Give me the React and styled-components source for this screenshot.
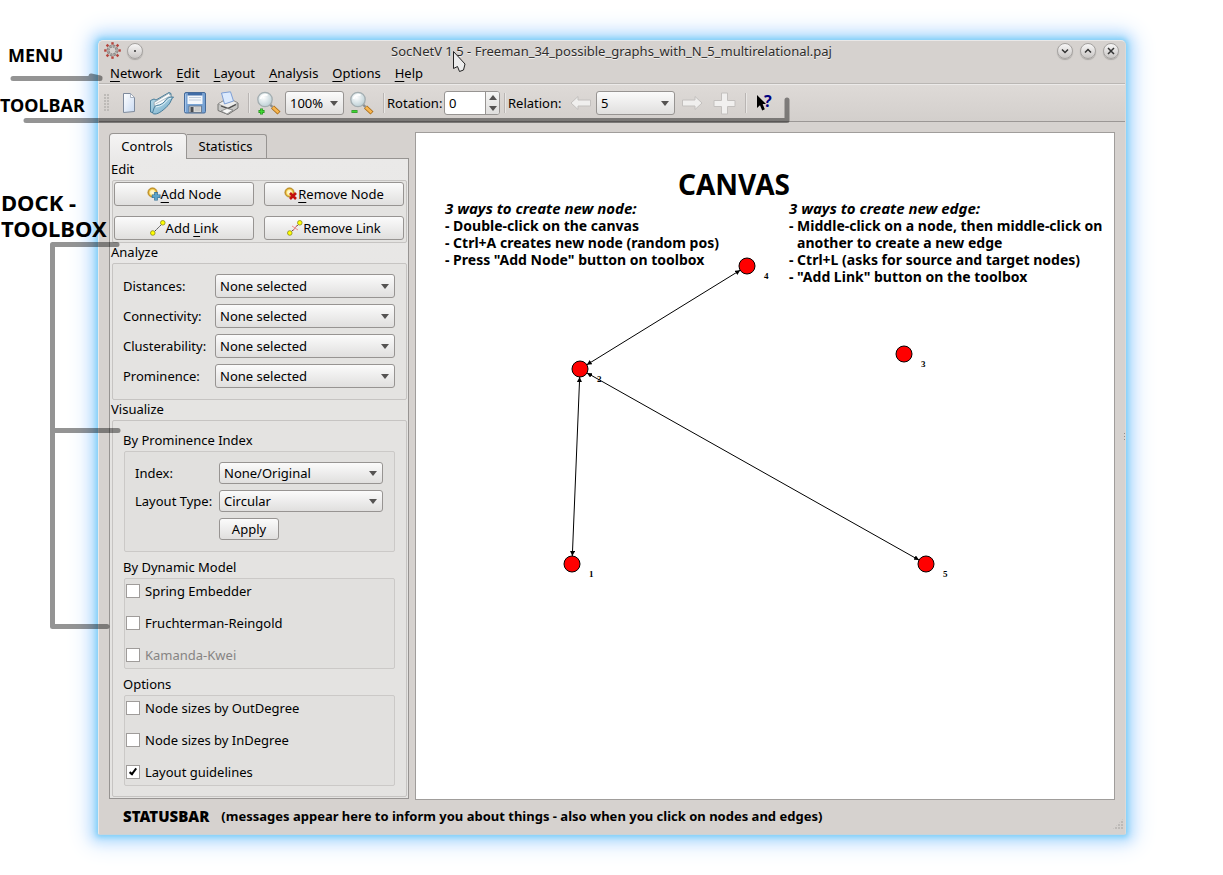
import React from "react";
import styled, { createGlobalStyle, css } from "styled-components";

const GlobalStyle = createGlobalStyle`
  *, *::before, *::after { box-sizing: border-box; }
  body {
    margin: 0;
    background: #fff;
    color: #000;
    font: 13px/16px "Noto Sans", "Open Sans", sans-serif;
  }
  button, input, select { font: inherit; color: inherit; margin: 0; }
`;

/* ---------- page and explanatory labels ---------- */

const Page = styled.div`
  position: relative;
  display: flex;
  padding: 40px 97px 40px 0;
  overflow: hidden;
`;

const Margin = styled.aside`
  position: relative;
  z-index: 2;
  flex: none;
  width: 98px;
  font-weight: 700;
  white-space: nowrap;
`;

const Callout = styled.p`
  margin: 0;
  padding: ${(p) => p.$pad};
  font-size: ${(p) => (p.$large ? "22px" : "18px")};
  line-height: ${(p) => (p.$large ? "26px" : "20px")};
`;

const CalloutLines = styled.svg`
  position: absolute;
  inset: 0;
  width: 100%;
  height: 100%;
  z-index: 1;
  pointer-events: none;
`;

/* ---------- window frame ---------- */

const Window = styled.div`
  flex: 1;
  min-width: 0;
  display: flex;
  flex-direction: column;
  background: #d6d2cf;
  border: 1px solid #e9e8e8;
  border-right-color: #dcdad8;
  border-bottom-color: #c9d4da;
  border-radius: 5px 5px 2px 2px;
  box-shadow: 0 0 5px 2px #7fcff8, 0 0 12px 6px #b5defc, 0 0 22px 10px #d6e8ff;
`;

const TitleBar = styled.header`
  display: grid;
  grid-template-columns: 1fr auto 1fr;
  align-items: center;
  height: 21px;
  padding: 0 6px 2px 5px;
`;

const Title = styled.h1`
  margin: 0;
  font-size: 13px;
  font-weight: 400;
  color: #2e2c2b;
  text-shadow: 0 1px 0 #f3f2f1;
  white-space: nowrap;
`;

const TitleGroup = styled.div`
  display: flex;
  align-items: center;
  gap: ${(p) => (p.$end ? 7 : 6)}px;
  justify-content: ${(p) => (p.$end ? "flex-end" : "flex-start")};
`;

const RoundButton = styled.button`
  display: grid;
  place-items: center;
  width: 16px;
  height: 16px;
  padding: 0;
  border: 1px solid #a5a2a0;
  border-radius: 50%;
  background: linear-gradient(#f7f6f6, #c9c6c4);
  box-shadow: 0 1px 1px #a9a6a3;
`;

const MenuBar = styled.nav`
  display: flex;
  align-items: center;
  gap: 14px;
  height: 22px;
  padding: 0 11px;
  border-bottom: 1px solid #bab7b4;
`;

const MenuItem = styled.button`
  padding: 0;
  border: 0;
  background: none;
  line-height: 20px;
`;

const Key = styled.span`
  text-decoration: underline;
  text-decoration-thickness: 1px;
  text-underline-offset: 3px;
`;

/* ---------- toolbar ---------- */

const ToolBar = styled.div`
  display: flex;
  align-items: center;
  height: 38px;
  padding: 0 5px;
  border-top: 1px solid #eceae9;
  border-bottom: 1px solid #9b9795;
  background: linear-gradient(#dedad7, #d3cfcc);
  white-space: nowrap;
`;

const Grip = styled.span`
  width: 6px;
  height: 18px;
  margin-right: 6px;
  background: radial-gradient(circle at 1px 1px, #bdbab7 1px, transparent 1px) 0 0 / 3px 3px;
`;

const ToolButton = styled.button`
  display: grid;
  place-items: center;
  flex: none;
  width: ${(p) => p.$width || 33}px;
  height: 30px;
  padding: 0;
  border: 0;
  background: none;
`;

const Separator = styled.span`
  width: 2px;
  height: 20px;
  margin: 0 ${(p) => p.$after || 2}px 0 ${(p) => p.$before ?? 4}px;
  border-left: 1px solid #b9b5b3;
  border-right: 1px solid #e9e7e5;
`;

const ToolLabel = styled.label`
  width: 57px;
`;

/* ---------- controls ---------- */

const raised = css`
  border: 1px solid #979492;
  border-radius: 3px;
  background: linear-gradient(#fbfbfb, #e0dfde);
`;

const SelectBox = styled.span`
  position: relative;
  display: block;
  flex: none;
  width: ${(p) => (p.$width ? p.$width + "px" : "auto")};
  &::after {
    content: "";
    position: absolute;
    right: 6px;
    top: 50%;
    margin-top: -2px;
    border: 4px solid transparent;
    border-top: 5px solid #555352;
    border-bottom-width: 0;
    pointer-events: none;
  }
`;

const Select = styled.select`
  ${raised}
  display: block;
  appearance: none;
  width: 100%;
  height: ${(p) => p.$height || 24}px;
  padding: 0 18px 0 4px;
`;

const Spin = styled.span`
  display: flex;
  width: 56px;
  height: 24px;
  border: 1px solid #979492;
  border-radius: 3px;
  background: #fff;
  overflow: hidden;
`;

const SpinInput = styled.input`
  flex: 1;
  min-width: 0;
  padding: 0 4px;
  border: 0;
  background: none;
`;

const SpinArrows = styled.span`
  display: grid;
  grid-template-rows: 1fr 1fr;
  width: 14px;
  border-left: 1px solid #979492;
  background: linear-gradient(#f5f5f4, #dfdedd);
`;

const SpinButton = styled.button`
  display: grid;
  place-items: center;
  padding: 0;
  border: 0;
  background: none;
`;

const PushButton = styled.button`
  ${raised}
  display: flex;
  align-items: center;
  justify-content: center;
  height: ${(p) => p.$height || 24}px;
  width: ${(p) => (p.$width ? p.$width + "px" : "auto")};
  padding: 0;
`;

/* ---------- dock ---------- */

const Main = styled.main`
  flex: 1;
  display: flex;
  gap: 6px;
  padding: 10px 10px 0;
`;

const Dock = styled.section`
  flex: none;
  width: 300px;
  padding: 1px 0;
`;

const Tabs = styled.div`
  display: flex;
  align-items: flex-end;
  height: 25px;
`;

const Tab = styled.button`
  position: relative;
  height: ${(p) => (p.$active ? 26 : 24)}px;
  width: ${(p) => (p.$active ? 78 : 80)}px;
  margin-bottom: ${(p) => (p.$active ? -1 : 0)}px;
  padding: 0 2px 1px 0;
  border: 1px solid #979492;
  border-left-width: ${(p) => (p.$active ? 1 : 0)}px;
  border-bottom: 0;
  border-radius: ${(p) => (p.$active ? "4px 4px 0 0" : "0 3px 0 0")};
  background: ${(p) => (p.$active ? "linear-gradient(#f5f4f4, #eae9e8)" : "#d8d5d3")};
`;

const Panel = styled.div`
  padding: 1px 1px 1px 2px;
  border: 1px solid #979492;
  background: linear-gradient(#eae9e8, #e5e4e2 240px);
`;

const GroupTitle = styled.h2`
  margin: 0 0 0 -1px;
  height: 20px;
  font-size: 13px;
  font-weight: 400;
  line-height: 18px;
`;

const Group = styled.div`
  border: 1px solid #c6c4c2;
  border-radius: 2px;
  background: #e4e3e1;
  padding: ${(p) => p.$pad || "10px 11px 10px 10px"};
`;

const ButtonGrid = styled.div`
  display: grid;
  grid-template-columns: 1fr 1fr;
  gap: 10px;
`;

const FieldGrid = styled.div`
  display: grid;
  grid-template-columns: ${(p) => p.$label}px 1fr;
  row-gap: 6px;
  align-items: center;
  white-space: nowrap;
`;

const SubGroup = styled.section`
  & + & { margin-top: 6px; }
`;

const SubTitle = styled.h3`
  margin: 0;
  height: 20px;
  font-size: 13px;
  font-weight: 400;
  line-height: 18px;
`;

const SubBox = styled.div`
  margin-left: 1px;
  border: 1px solid #cbc9c7;
  border-radius: 2px;
  background: #e1e0de;
  padding: ${(p) => (p.$checks ? "5px 1px 6px" : "10px 11px 11px 10px")};
`;

const CheckList = styled.div`
  display: grid;
  gap: 18px;
`;

const CheckRow = styled.label`
  display: flex;
  align-items: center;
  gap: 5px;
  height: 14px;
  color: ${(p) => (p.$disabled ? "#868483" : "#000")};
`;

const CheckInput = styled.input`
  appearance: none;
  display: grid;
  place-items: center;
  width: 14px;
  height: 14px;
  border: 1px solid #9f9c9a;
  background: #fff;
  &:checked::before {
    content: "";
    width: 4px;
    height: 8px;
    margin-bottom: 2px;
    border: solid #000;
    border-width: 0 2px 2px 0;
    transform: rotate(38deg);
  }
`;

/* ---------- canvas ---------- */

const Canvas = styled.section`
  position: relative;
  flex: 1;
  min-width: 0;
  padding-top: 35px;
  border: 1px solid #a09d9b;
  background: #fff;
  overflow: hidden;
`;

const Graph = styled.svg`
  position: absolute;
  inset: 0;
  width: 100%;
  height: 100%;
`;

const CanvasTitle = styled.h2`
  margin: 0;
  padding-right: 62px;
  text-align: center;
  font-size: 28px;
  line-height: 32px;
`;

const Notes = styled.div`
  display: grid;
  grid-template-columns: 344px 1fr;
  padding-left: 29px;
  font-size: 14px;
  line-height: 17px;
  font-weight: 700;
  white-space: nowrap;
`;

const NoteTitle = styled.h3`
  margin: 0;
  font-size: 15px;
  font-style: italic;
`;

const NoteLine = styled.p`
  margin: 0;
  padding-left: ${(p) => (p.$indent ? 8 : 0)}px;
`;

const StatusBar = styled.footer`
  display: flex;
  align-items: center;
  gap: 12px;
  height: 34px;
  padding: 0 1px 2px 24px;
  font-weight: 700;
  white-space: nowrap;
`;

const StatusName = styled.strong`
  font-size: 15px;
`;

const StatusText = styled.span`
  flex: 1;
  font-size: 13px;
`;

const SizeGrip = styled.span`
  align-self: flex-end;
  width: 12px;
  height: 12px;
  margin-bottom: 2px;
  clip-path: polygon(100% 0, 100% 100%, 0 100%);
  background: radial-gradient(circle at 1px 1px, #bdbab7 1px, transparent 1px) 0 0 / 3px 3px;
`;

/* ---------- icons ---------- */

const Svg = ({ w, h = w, children }) => (
  <svg width={w} height={h} viewBox={`0 0 ${w} ${h}`} aria-hidden="true">{children}</svg>
);

const Gradients = () => (
  <defs>
    <linearGradient id="paper" x1="0" y1="0" x2="1" y2="1">
      <stop offset="0" stopColor="#fff" /><stop offset="1" stopColor="#c9daf2" />
    </linearGradient>
    <linearGradient id="folder" x1="0" y1="0" x2="1" y2="1">
      <stop offset="0" stopColor="#c4e2ee" /><stop offset="1" stopColor="#6ba5c4" />
    </linearGradient>
    <radialGradient id="lens" cx="0.4" cy="0.35" r="0.7">
      <stop offset="0" stopColor="#fff" /><stop offset="1" stopColor="#b9cdd3" />
    </radialGradient>
    <radialGradient id="gold" cx="0.5" cy="0.5" r="0.5">
      <stop offset="0" stopColor="#fffce8" /><stop offset="0.5" stopColor="#fff2a8" />
      <stop offset="0.75" stopColor="#e8b838" /><stop offset="1" stopColor="#a87a1c" />
    </radialGradient>
  </defs>
);

const AppIcon = () => (
  <Svg w={17}>
    <circle cx="8.5" cy="8.5" r="4.4" fill="none" stroke="#8f8b89" strokeWidth="3" strokeDasharray="2.4 1" />
    <circle cx="8.5" cy="8.5" r="4.5" fill="none" stroke="#aaa6a3" strokeWidth="1" />
    {[0, 45, 90, 135, 180, 225, 270, 315].map((a) => (
      <rect key={a} x="7.3" y="0.2" width="2.4" height="2.4" fill="#b5443c" transform={`rotate(${a} 8.5 8.5)`} />
    ))}
  </Svg>
);

const NewIcon = () => (
  <Svg w={16} h={24}>
    <path d="M2.500 2.500h7l4 4v14l-11 1z" fill="url(#paper)" stroke="#7e8a9c" />
    <path d="M9.500 2.500v4h4z" fill="#fff" stroke="#97a2b3" strokeWidth="0.800" />
  </Svg>
);

const OpenIcon = () => (
  <Svg w={26} h={24}>
    <path d="M1.500 21V9.500L5 8l2 1L20 1.500l2 1V9L5 22z" fill="url(#folder)" stroke="#3c7392" strokeWidth="0.900" />
    <path d="M5 11.500L19.500 2.500l2.500 2-1 6L6 19z" fill="#fafcfd" stroke="#8d9da6" strokeWidth="0.800" />
    <path d="M6.500 13L21 5" stroke="#a7b6be" strokeWidth="0.800" />
    <path d="M3.500 22C5 18 5 15 7.500 14.500c4.500-.5 7.500-2.500 9.500-6 1.500-2 4.500-2.500 7.500-2.500-2.500 2-2.500 5.500-5.500 8.500-4 4-9 8.500-13 8.500-1.200 0-2-.3-2.500-1z" fill="url(#folder)" stroke="#3c7392" strokeWidth="0.900" />
    <path d="M7 16c5-.5 9-3.500 11-6.500 1-1.300 2.500-2 4-2.300" stroke="#e1f2f8" fill="none" />
  </Svg>
);

const SaveIcon = () => (
  <Svg w={24} h={24}>
    <rect x="1.500" y="1.500" width="21" height="20.500" rx="1.500" fill="#78a3d4" stroke="#466a98" />
    <rect x="4.500" y="2" width="15" height="11" fill="#f4f7fb" />
    <path d="M6 6.500h12M6 9h12" stroke="#c0cddd" />
    <rect x="4.500" y="2" width="15" height="2.500" fill="#3f6ca7" />
    <path d="M2.500 3v18" stroke="#a3c3ea" />
    <rect x="6" y="15" width="12.500" height="6.500" fill="#d8d8d6" stroke="#5f6f84" strokeWidth="0.800" />
    <rect x="7.500" y="16" width="3" height="5" fill="#4a4d52" />
    <path d="M12 17h5M12 19h5" stroke="#bbb" />
  </Svg>
);

const PrintIcon = () => (
  <Svg w={24} h={25}>
    <path d="M2 13l5-3 2 1.500 8-2 5 2.500v5l-10 6.500-10-4z" fill="#c7c7c5" stroke="#6b6b69" strokeWidth="0.900" />
    <path d="M2 13l5-3 2 1.500 8-2 5 2.500-10 5z" fill="#ededec" stroke="#8b8b89" strokeWidth="0.700" />
    <path d="M5.500 2l9-1.200L17.500 10 8.500 13z" fill="#dceafd" stroke="#7d9ed4" />
    <path d="M5 15l7 2.500 8-4" stroke="#4b4b4a" fill="none" strokeWidth="1.300" />
    <path d="M5 20l6-2.500 6 1.500-6 4z" fill="#f8f8f7" stroke="#777" strokeWidth="0.700" />
  </Svg>
);

const ZoomIcon = ({ plus }) => (
  <Svg w={26} h={25}>
    <path d="M16.500 16l6.500 6" stroke="#a86b16" strokeWidth="4.400" strokeLinecap="butt" />
    <path d="M16.800 16.300l5.700 5.200" stroke="#f7b650" strokeWidth="2.600" strokeLinecap="butt" />
    <path d="M13.500 13l3 3" stroke="#8b8f90" strokeWidth="2.400" />
    <circle cx="9" cy="8.500" r="7.200" fill="url(#lens)" stroke="#a3adb0" strokeWidth="1.300" />
    <path d="M4.500 8c1-3.500 4-4.500 7-4" stroke="#fff" strokeWidth="1.800" fill="none" />
    <path d={plus ? "M2.500 20.500h6M5.500 17.500v6" : "M2.500 20.500h6"} stroke="#238a1c" strokeWidth="2.800" />
    <path d={plus ? "M3 20.500h5M5.500 18v5" : "M3 20.500h5"} stroke="#3fd532" strokeWidth="1.600" />
  </Svg>
);

const ArrowIcon = ({ right }) => (
  <Svg w={22} h={16}>
    <path
      d="M1 8L8 1.500V5h12.500v6H8v3.500z"
      transform={right ? "rotate(180 11 8)" : undefined}
      fill="#f0efee" stroke="#c3c0be"
    />
  </Svg>
);

const PlusIcon = () => (
  <Svg w={23}>
    <path d="M8.500 1h6v7.500H22v6h-7.500V22h-6v-7.500H1v-6h7.500z" fill="#f1f0ef" stroke="#c3c0be" />
  </Svg>
);

const HelpIcon = () => (
  <Svg w={22} h={24}>
    <path d="M2 4v13l3-2.700 2.200 5.200 2.600-1.200L7.600 13H11z" fill="#000" />
    <text x="9" y="16" fontFamily="Noto Sans" fontWeight="700" fontSize="16" fill="#000080">?</text>
  </Svg>
);

const NodeIcon = ({ remove }) => (
  <Svg w={14} h={14}>
    <circle cx="5.500" cy="5.500" r="4.700" fill="url(#gold)" stroke="#b98b23" strokeWidth="0.600" />
    {remove ? (
      <path d="M6 6l6 6M12 6l-6 6" stroke="#c3100d" strokeWidth="2.600" />
    ) : (
      <g>
        <path d="M9 5v8.500M4.800 9.300h8.700" stroke="#2f6d94" strokeWidth="3.600" />
        <path d="M9 5.700v7.200M5.500 9.300h7.200" stroke="#5ba3c9" strokeWidth="2.400" />
      </g>
    )}
  </Svg>
);

const LinkIcon = ({ remove }) => (
  <Svg w={16}>
    <path d="M3 13L13 3" stroke="#333" strokeDasharray="2 1" />
    {remove && <path d="M5 6l6 4M10 5l-4 6" stroke="#ef8d8d" />}
    <circle cx="2.800" cy="13" r="2.300" fill="#ff0" stroke="#8a8a1c" strokeWidth="0.800" />
    <circle cx="12.800" cy="2.800" r="2.300" fill="#ff0" stroke="#8a8a1c" strokeWidth="0.800" />
  </Svg>
);

const Glyph = ({ d }) => (
  <Svg w={10}><path d={d} fill="none" stroke="#333" strokeWidth="1.500" /></Svg>
);

/* ---------- parts ---------- */

const MENUS = ["Network", "Edit", "Layout", "Analysis", "Options", "Help"];

const Accel = ({ text, at = 0 }) => (
  <span>
    {text.slice(0, at)}<Key>{text[at]}</Key>{text.slice(at + 1)}
  </span>
);

const DropDown = ({ id, value, width, height, label }) => (
  <SelectBox $width={width}>
    <Select id={id} $height={height} aria-label={label} defaultValue={value}>
      <option>{value}</option>
    </Select>
  </SelectBox>
);

const Field = ({ id, label, value, height }) => (
  <>
    <label htmlFor={id}>{label}</label>
    <DropDown id={id} value={value} height={height} />
  </>
);

const Check = ({ label, ...rest }) => (
  <CheckRow $disabled={rest.disabled}>
    <CheckInput type="checkbox" {...rest} />
    {label}
  </CheckRow>
);

const NODES = [
  { id: 1, x: 156, y: 431 },
  { id: 2, x: 164, y: 236 },
  { id: 3, x: 488, y: 221 },
  { id: 4, x: 331, y: 133 },
  { id: 5, x: 510, y: 431 },
];
const EDGES = [[2, 4], [2, 1], [2, 5]];

const Network = () => (
  <Graph role="img" aria-label="Network graph">
    <defs>
      <marker id="head" viewBox="0 0 6 6" refX="6" refY="3" markerWidth="5" markerHeight="5" orient="auto-start-reverse">
        <path d="M0 0l6 3-6 3z" />
      </marker>
    </defs>
    {EDGES.map(([a, b]) => {
      const s = NODES[a - 1];
      const t = NODES[b - 1];
      const len = Math.hypot(t.x - s.x, t.y - s.y);
      const dx = ((t.x - s.x) / len) * 8;
      const dy = ((t.y - s.y) / len) * 8;
      return (
        <line
          key={`${a}-${b}`} x1={s.x + dx} y1={s.y + dy} x2={t.x - dx} y2={t.y - dy}
          stroke="#000" markerStart="url(#head)" markerEnd="url(#head)"
        />
      );
    })}
    {NODES.map((n) => (
      <g key={n.id}>
        <circle cx={n.x} cy={n.y} r="8" fill="#f00" stroke="#000" />
        <text x={n.x + 17} y={n.y + 13} fontFamily="Liberation Serif, serif" fontSize="9" fontWeight="700">{n.id}</text>
      </g>
    ))}
  </Graph>
);

export default function App() {
  return (
    <Page>
      <GlobalStyle />
      <Margin>
        <Callout $pad="5px 0 0 8px">MENU</Callout>
        <Callout $pad="30px 0 0 0">TOOLBAR</Callout>
        <Callout $large $pad="74px 0 0 1px">DOCK -<br />TOOLBOX</Callout>
      </Margin>

      <Window>
        <TitleBar>
          <TitleGroup>
            <AppIcon />
            <RoundButton aria-label="On all desktops"><Svg w={4}><circle cx="2" cy="2" r="1" fill="#333" /></Svg></RoundButton>
          </TitleGroup>
          <Title>SocNetV 1.5 - Freeman_34_possible_graphs_with_N_5_multirelational.paj</Title>
          <TitleGroup $end>
            <RoundButton aria-label="Minimize"><Glyph d="M2 3.500l3 3 3-3" /></RoundButton>
            <RoundButton aria-label="Maximize"><Glyph d="M2 6.500l3-3 3 3" /></RoundButton>
            <RoundButton aria-label="Close"><Glyph d="M2 2l6 6M8 2l-6 6" /></RoundButton>
          </TitleGroup>
        </TitleBar>

        <MenuBar>
          {MENUS.map((m) => <MenuItem key={m}><Accel text={m} /></MenuItem>)}
        </MenuBar>

        <ToolBar>
          <Grip />
          <ToolButton $width={26} aria-label="New"><NewIcon /></ToolButton>
          <ToolButton $width={40} aria-label="Open"><OpenIcon /></ToolButton>
          <ToolButton $width={26} aria-label="Save"><SaveIcon /></ToolButton>
          <ToolButton $width={40} aria-label="Print"><PrintIcon /></ToolButton>
          <Separator $before={0} $after={3} />
          <ToolButton $width={32} aria-label="Zoom in"><ZoomIcon plus /></ToolButton>
          <DropDown label="Zoom" value="100%" width={59} />
          <ToolButton $width={35} aria-label="Zoom out"><ZoomIcon /></ToolButton>
          <Separator />
          <ToolLabel htmlFor="rotation">Rotation:</ToolLabel>
          <Spin>
            <SpinInput id="rotation" type="text" defaultValue="0" />
            <SpinArrows>
              <SpinButton aria-label="Rotate more"><Svg w={8} h={5}><path d="M0 5l4-5 4 5z" fill="#555352" /></Svg></SpinButton>
              <SpinButton aria-label="Rotate less"><Svg w={8} h={5}><path d="M0 0l4 5 4-5z" fill="#555352" /></Svg></SpinButton>
            </SpinArrows>
          </Spin>
          <Separator />
          <ToolLabel htmlFor="relation">Relation:</ToolLabel>
          <ToolButton $width={31} aria-label="Previous relation"><ArrowIcon /></ToolButton>
          <DropDown id="relation" value="5" width={79} />
          <ToolButton aria-label="Next relation"><ArrowIcon right /></ToolButton>
          <ToolButton aria-label="Add relation"><PlusIcon /></ToolButton>
          <Separator $after={3} />
          <ToolButton $width={32} aria-label="What is this"><HelpIcon /></ToolButton>
        </ToolBar>

        <Main>
          <Dock>
            <Tabs role="tablist">
              <Tab role="tab" aria-selected="true" $active>Controls</Tab>
              <Tab role="tab" aria-selected="false">Statistics</Tab>
            </Tabs>
            <Panel>
              <GroupTitle>Edit</GroupTitle>
              <Group $pad="1px 2px 2px 1px">
                <ButtonGrid>
                  <PushButton><NodeIcon /><Accel text="Add Node" /></PushButton>
                  <PushButton><NodeIcon remove /><Accel text="Remove Node" /></PushButton>
                  <PushButton><LinkIcon /><Accel text="Add Link" at={4} /></PushButton>
                  <PushButton><LinkIcon remove />Remove Link</PushButton>
                </ButtonGrid>
              </Group>

              <GroupTitle>Analyze</GroupTitle>
              <Group $pad="10px 11px 11px 10px">
                <FieldGrid $label={92}>
                  <Field id="distances" label="Distances:" value="None selected" />
                  <Field id="connectivity" label="Connectivity:" value="None selected" />
                  <Field id="clusterability" label="Clusterability:" value="None selected" />
                  <Field id="prominence" label="Prominence:" value="None selected" />
                </FieldGrid>
              </Group>

              <GroupTitle>Visualize</GroupTitle>
              <Group>
                <SubGroup>
                  <SubTitle>By Prominence Index</SubTitle>
                  <SubBox>
                    <FieldGrid $label={84}>
                      <Field id="index" label="Index:" value="None/Original" height={22} />
                      <Field id="layout" label="Layout Type:" value="Circular" height={22} />
                      <span />
                      <PushButton $height={22} $width={60}>Apply</PushButton>
                    </FieldGrid>
                  </SubBox>
                </SubGroup>
                <SubGroup>
                  <SubTitle>By Dynamic Model</SubTitle>
                  <SubBox $checks>
                    <CheckList>
                      <Check label="Spring Embedder" />
                      <Check label="Fruchterman-Reingold" />
                      <Check label="Kamanda-Kwei" disabled />
                    </CheckList>
                  </SubBox>
                </SubGroup>
                <SubGroup>
                  <SubTitle>Options</SubTitle>
                  <SubBox $checks>
                    <CheckList>
                      <Check label="Node sizes by OutDegree" />
                      <Check label="Node sizes by InDegree" />
                      <Check label="Layout guidelines" defaultChecked />
                    </CheckList>
                  </SubBox>
                </SubGroup>
              </Group>
            </Panel>
          </Dock>

          <Canvas>
            <Network />
            <CanvasTitle>CANVAS</CanvasTitle>
            <Notes>
              <div>
                <NoteTitle>3 ways to create new node:</NoteTitle>
                <NoteLine>- Double-click on the canvas</NoteLine>
                <NoteLine>- Ctrl+A creates new node (random pos)</NoteLine>
                <NoteLine>- Press "Add Node" button on toolbox</NoteLine>
              </div>
              <div>
                <NoteTitle>3 ways to create new edge:</NoteTitle>
                <NoteLine>- Middle-click on a node, then middle-click on</NoteLine>
                <NoteLine $indent>another to create a new edge</NoteLine>
                <NoteLine>- Ctrl+L (asks for source and target nodes)</NoteLine>
                <NoteLine>- "Add Link" button on the toolbox</NoteLine>
              </div>
            </Notes>
          </Canvas>
        </Main>

        <StatusBar>
          <StatusName>STATUSBAR</StatusName>
          <StatusText>(messages appear here to inform you about things - also when you click on nodes and edges)</StatusText>
          <SizeGrip />
        </StatusBar>
      </Window>

      <CalloutLines aria-hidden="true">
        <Gradients />
        <g fill="none" stroke="#000" strokeOpacity="0.42" strokeWidth="5" strokeLinecap="round" strokeLinejoin="round">
          <path d="M13 78.500H100M91 76l9 2" />
          <path d="M26 120.500H787V100" />
          <path d="M117 244.500H52.500V626.500H107M52.500 430.500H118" />
        </g>
        <path d="M453.500 51.500v17l4-2 2 5 4-1.500 1.500-6z" fill="#ececec" stroke="#222" strokeLinejoin="round" />
        <path d="M1124.500 433v9" stroke="#8f8b89" strokeDasharray="1 2" />
      </CalloutLines>
    </Page>
  );
}
